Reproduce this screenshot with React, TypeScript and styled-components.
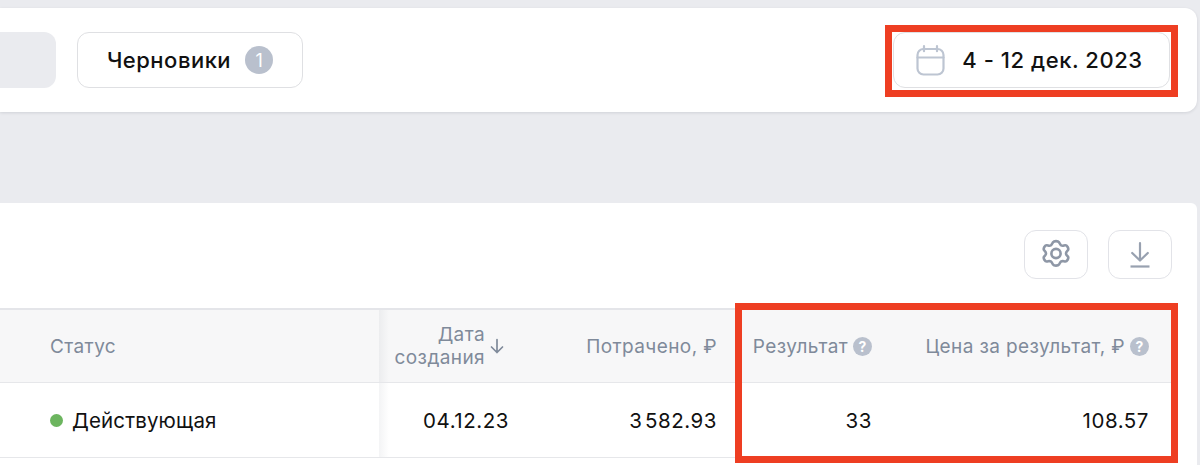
import * as React from 'react';
import styled, {createGlobalStyle} from 'styled-components';

const Global = createGlobalStyle`
	html, body {
		margin: 0;
		padding: 0;
		background: #eaebef;
	}
	body {
		font-family: Inter, "Noto Sans", "Liberation Sans", sans-serif;
		color: #111;
		-webkit-font-smoothing: antialiased;
	}
`;

const Page = styled.div`
	position: relative;
	width: 1200px;
	height: 465px;
	overflow: hidden;
	box-sizing: border-box;
	padding: 8px 3px 0 0;
	display: flex;
	flex-direction: column;
	gap: 91px;
`;

const TopBar = styled.div`
	height: 104px;
	flex: none;
	box-sizing: border-box;
	padding: 24px 27px 24px 0;
	background: #fff;
	border-radius: 0 12px 12px 0;
	box-shadow: 0 1px 3px rgba(30, 40, 60, 0.12);
	display: flex;
	align-items: stretch;
	gap: 21px;
`;

const ActiveTab = styled.div`
	width: 56px;
	background: #eaebef;
	border-radius: 0 12px 12px 0;
`;

const TabButton = styled.div`
	width: 226px;
	box-sizing: border-box;
	border: 1.5px solid #dfe0e3;
	border-radius: 12px;
	display: flex;
	align-items: center;
	justify-content: center;
	gap: 14px;
	font-size: 22px;
	font-weight: 500;
	letter-spacing: 0.5px;
`;

const Badge = styled.span`
	width: 28px;
	height: 28px;
	border-radius: 50%;
	background: #b9c0cd;
	color: #fff;
	font-size: 18px;
	font-weight: 400;
	letter-spacing: 0;
	display: flex;
	align-items: center;
	justify-content: center;
`;

const DateButton = styled.div`
	margin-left: auto;
	width: 277px;
	box-sizing: border-box;
	border: 1.5px solid #dfe0e3;
	border-radius: 12px;
	display: flex;
	align-items: center;
	justify-content: center;
	gap: 17px;
	font-size: 22px;
	font-weight: 500;
	letter-spacing: 0.55px;
	padding-right: 4px;
`;

const Card = styled.div`
	flex: 1;
	background: #fff;
	border-radius: 0 6px 0 0;
	padding-right: 24px;
	display: flex;
	flex-direction: column;
`;

const CardTools = styled.div`
	height: 105px;
	flex: none;
	box-sizing: border-box;
	padding-top: 27px;
	padding-right: 1px;
	display: flex;
	justify-content: flex-end;
	align-items: flex-start;
	gap: 20px;
`;

const IconButton = styled.div`
	width: 64px;
	height: 49px;
	box-sizing: border-box;
	border: 1.5px solid #e2e3e8;
	border-radius: 12px;
	display: flex;
	align-items: center;
	justify-content: center;
`;

const Row = styled.div<{$head?: boolean}>`
	display: grid;
	grid-template-columns: 379px 154px 208px 155px 277px;
	height: 75px;
	box-sizing: border-box;
	border-bottom: 1.5px solid #e6e7ea;
	background: ${p => (p.$head ? '#f7f7f8' : '#fff')};
	border-top: ${p => (p.$head ? '2px solid #e4e5e9' : 'none')};
	color: ${p => (p.$head ? '#7f8a9a' : '#111')};
	font-size: ${p => (p.$head ? 19 : 20.5)}px;
	letter-spacing: ${p => (p.$head ? 0.4 : 0.15)}px;
`;

const Cell = styled.div<{$status?: boolean; $sticky?: boolean; $num?: boolean}>`
	display: flex;
	align-items: center;
	gap: 5px;
	box-sizing: border-box;
	justify-content: ${p => (p.$status ? 'flex-start' : 'flex-end')};
	padding: ${p => (p.$status ? '0 0 0 50px' : '0 24px 0 0')};
	letter-spacing: ${p => (p.$num ? '0.55px' : 'inherit')};
	background-image: ${p => (p.$sticky ? 'linear-gradient(90deg, rgba(60, 70, 90, 0.06), rgba(60, 70, 90, 0) 10px)' : 'none')};
`;

const TwoLines = styled.span`
	text-align: right;
	line-height: 23px;
`;

const Dot = styled.span`
	width: 13px;
	height: 13px;
	border-radius: 50%;
	background: #6cb55f;
	margin-right: 4px;
`;

const Hint = styled.span`
	width: 19px;
	height: 19px;
	border-radius: 50%;
	background: #b9c0cd;
	color: #fff;
	font-size: 14px;
	font-weight: 700;
	letter-spacing: 0;
	display: flex;
	align-items: center;
	justify-content: center;
`;

// красные рамки поверх скриншота
const Frame = styled.div<{$x: number; $y: number; $w: number; $h: number}>`
	position: absolute;
	left: ${p => p.$x}px;
	top: ${p => p.$y}px;
	width: ${p => p.$w}px;
	height: ${p => p.$h}px;
	box-sizing: border-box;
	border: 7.5px solid #ee3e22;
`;

const CalendarIcon = () => (
	<svg width="29" height="31" viewBox="0 0 29 31" fill="none" stroke="#bdc5d2" strokeWidth="2.2" strokeLinecap="round">
		<rect x="1.5" y="4" width="26" height="25.5" rx="6"/>
		<path d="M1.5 12.5h26M8 1.2v5M21 1.2v5"/>
	</svg>
);

const GearIcon = () => (
	<svg width="32" height="32" viewBox="0 0 32 32" fill="none" stroke="#8e97a6" strokeWidth="2.6" strokeLinejoin="round">
		<path d="M13 3.200c1-1.400 5-1.400 6 0 .9 1.300 1 2.500 2.200 3.200 1.300.7 2.400.1 4-.1 1.800-.2 3.800 3.200 2.800 4.800-.9 1.300-2 1.800-2 3.300s1 2.100 2 3.300c1 1.600-1 5-2.800 4.800-1.600-.2-2.700-.8-4-.1-1.200.7-1.300 1.900-2.200 3.200-1 1.400-5 1.400-6 0-.9-1.300-1-2.500-2.200-3.200-1.300-.7-2.400-.1-4 .1-1.800.2-3.800-3.200-2.800-4.800.9-1.200 2-1.800 2-3.300s-1.100-2-2-3.300c-1-1.600 1-5 2.800-4.800 1.600.2 2.700.8 4 .1C12 5.700 12.100 4.500 13 3.200z"/>
		<circle cx="16" cy="14.500" r="4.600"/>
	</svg>
);

const DownloadIcon = () => (
	<svg width="20" height="26" viewBox="0 0 20 26" fill="none" stroke="#98a1b0" strokeWidth="2.2" strokeLinecap="round" strokeLinejoin="round">
		<path d="M10 1.200v17M2.200 11 10 18.500 17.800 11"/>
		<path d="M0.500 24.500h19" strokeLinecap="butt"/>
	</svg>
);

const SortArrow = () => (
	<svg width="19" height="16" viewBox="0 0 19 16" fill="none" stroke="#7f8a9a" strokeWidth="1.700" strokeLinecap="round" strokeLinejoin="round">
		<path d="M7 1.500v13M1.500 9 7 14.500 12.500 9"/>
	</svg>
);

export default function App() {
	return <Page>
		<Global/>
		<TopBar>
			<ActiveTab/>
			<TabButton>Черновики <Badge>1</Badge></TabButton>
			<DateButton><CalendarIcon/>4 - 12 дек. 2023</DateButton>
		</TopBar>
		<Card>
			<CardTools>
				<IconButton><GearIcon/></IconButton>
				<IconButton><DownloadIcon/></IconButton>
			</CardTools>
			<Row $head>
				<Cell $status>Статус</Cell>
				<Cell $sticky><TwoLines>Дата<br/>создания</TwoLines><SortArrow/></Cell>
				<Cell>Потрачено, ₽</Cell>
				<Cell>Результат <Hint>?</Hint></Cell>
				<Cell>Цена за результат, ₽ <Hint>?</Hint></Cell>
			</Row>
			<Row>
				<Cell $status><Dot/>Действующая</Cell>
				<Cell $sticky $num>04.12.23</Cell>
				<Cell $num>3{'\u200A'}582.93</Cell>
				<Cell $num>33</Cell>
				<Cell $num>108.57</Cell>
			</Row>
		</Card>
		<Frame $x={885} $y={25} $w={293} $h={72}/>
		<Frame $x={734.5} $y={303} $w={443.5} $h={159.5}/>
	</Page>;
}
